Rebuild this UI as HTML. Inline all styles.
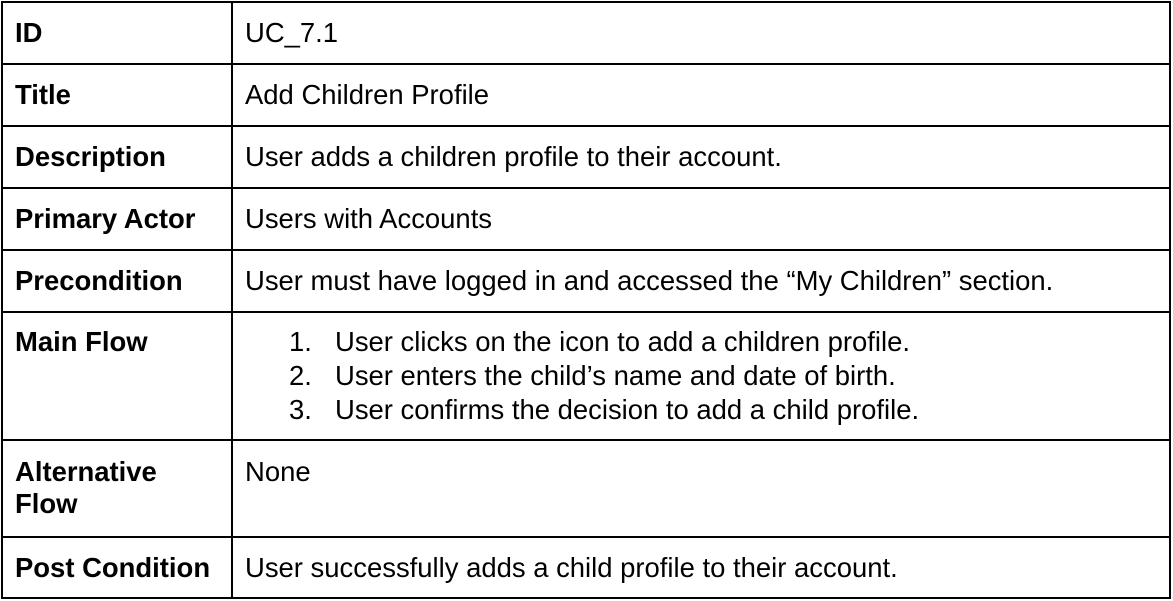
<!DOCTYPE html>
<html><head><style>
html,body{margin:0;padding:0;background:#fff;width:1173px;height:601px;overflow:hidden}
body{font-family:"Liberation Sans",Arial,sans-serif;font-size:27.45px;color:#000;position:relative}
.h{position:absolute;left:1px;width:1170px;height:2px;background:#000}
.v{position:absolute;top:1px;height:598px;width:2px;background:#000}
.t{position:absolute;line-height:32px;white-space:nowrap}
.b{font-weight:bold;left:15px}
.c{left:245px}
</style></head><body>
<div class="h" style="top:1px"></div>
<div class="h" style="top:63px"></div>
<div class="h" style="top:125px"></div>
<div class="h" style="top:187px"></div>
<div class="h" style="top:249px"></div>
<div class="h" style="top:311px"></div>
<div class="h" style="top:439px"></div>
<div class="h" style="top:536px"></div>
<div class="h" style="top:597px"></div>
<div class="v" style="left:1px"></div>
<div class="v" style="left:231px"></div>
<div class="v" style="left:1169px"></div>

<div class="t b" style="top:17px">ID</div><div class="t c" style="top:17px">UC_7.1</div>
<div class="t b" style="top:79px">Title</div><div class="t c" style="top:79px">Add Children Profile</div>
<div class="t b" style="top:141px">Description</div><div class="t c" style="top:141px">User adds a children profile to their account.</div>
<div class="t b" style="top:203px">Primary Actor</div><div class="t c" style="top:203px">Users with Accounts</div>
<div class="t b" style="top:265px">Precondition</div><div class="t c" style="top:265px">User must have logged in and accessed the “My Children” section.</div>
<div class="t b" style="top:326px">Main Flow</div>
<div class="t" style="left:289px;top:326px">1.</div><div class="t" style="left:335px;top:326px">User clicks on the icon to add a children profile.</div>
<div class="t" style="left:289px;top:360px">2.</div><div class="t" style="left:335px;top:360px">User enters the child’s name and date of birth.</div>
<div class="t" style="left:289px;top:394px">3.</div><div class="t" style="left:335px;top:394px">User confirms the decision to add a child profile.</div>
<div class="t b" style="top:456px">Alternative</div><div class="t b" style="top:488px">Flow</div>
<div class="t c" style="top:456px">None</div>
<div class="t b" style="top:552px">Post Condition</div><div class="t c" style="top:552px">User successfully adds a child profile to their account.</div>
</body></html>
